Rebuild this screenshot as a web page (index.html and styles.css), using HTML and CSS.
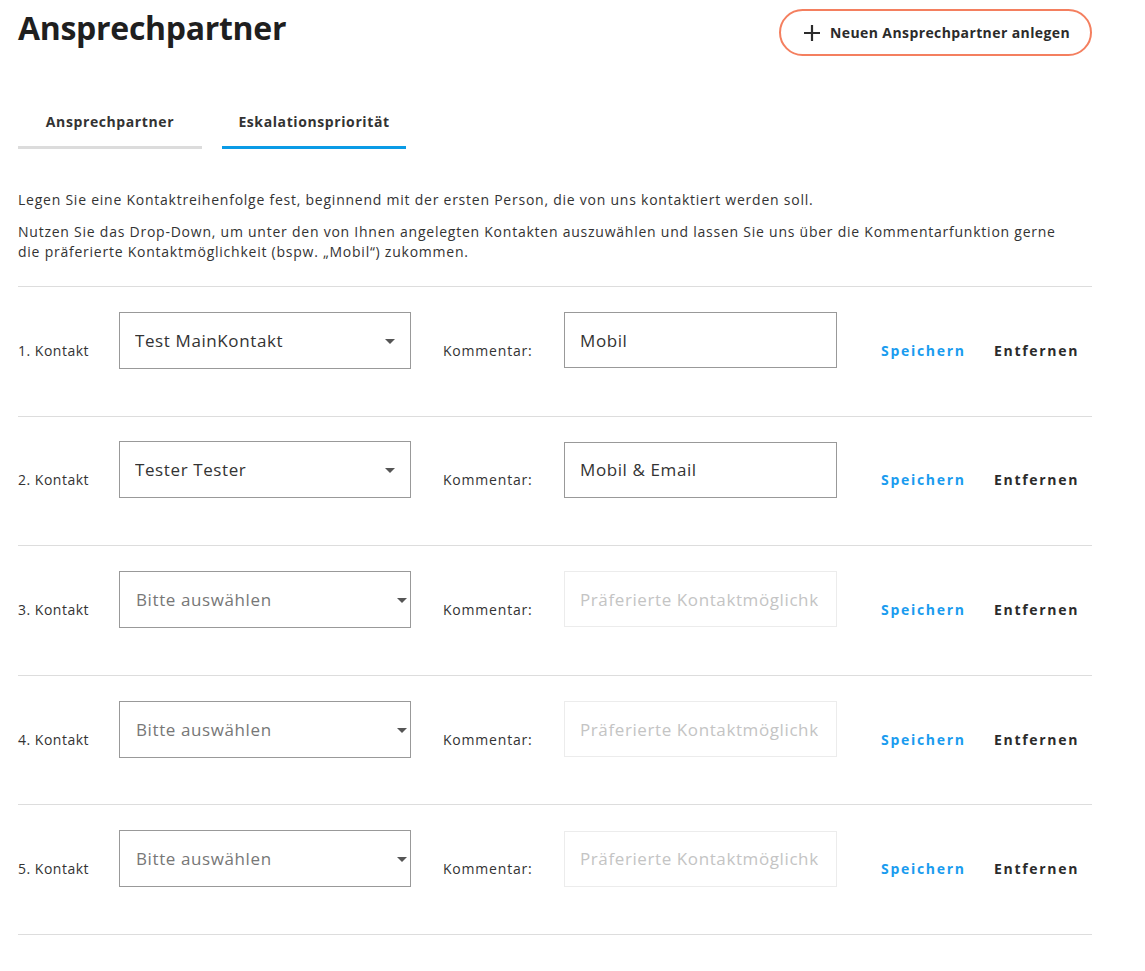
FILE: index.html
```html
<!DOCTYPE html>
<html lang="de">
<head>
<meta charset="utf-8">
<title>Ansprechpartner</title>
<link rel="stylesheet" href="styles.css">
</head>
<body>
<div class="page">
  <header class="head">
    <h1 class="title">Ansprechpartner</h1>
    <button class="btn-new" type="button">
      <svg class="plus" width="18" height="18" viewBox="0 0 18 18"><path d="M9 1v16M1 9h16" stroke="#2b2b2b" stroke-width="2.2" fill="none"/></svg>
      <span>Neuen Ansprechpartner anlegen</span>
    </button>
  </header>

  <nav class="tabs">
    <div class="tab">Ansprechpartner</div>
    <div class="tab active">Eskalationspriorität</div>
  </nav>

  <p class="intro">Legen Sie eine Kontaktreihenfolge fest, beginnend mit der ersten Person, die von uns kontaktiert werden soll.</p>
  <p class="intro second">Nutzen Sie das Drop-Down, um unter den von Ihnen angelegten Kontakten auszuwählen und lassen Sie uns über die Kommentarfunktion gerne die präferierte Kontaktmöglichkeit (bspw. „Mobil“) zukommen.</p>

  <div class="rows">
    <div class="row">
      <span class="k-label">1. Kontakt</span>
      <div class="select"><span class="val">Test MainKontakt</span><span class="arrow"></span></div>
      <span class="c-label">Kommentar:</span>
      <div class="input"><span class="val">Mobil</span></div>
      <div class="actions"><a class="save">Speichern</a><a class="remove">Entfernen</a></div>
    </div>
    <div class="row">
      <span class="k-label">2. Kontakt</span>
      <div class="select"><span class="val">Tester Tester</span><span class="arrow"></span></div>
      <span class="c-label">Kommentar:</span>
      <div class="input"><span class="val">Mobil &amp; Email</span></div>
      <div class="actions"><a class="save">Speichern</a><a class="remove">Entfernen</a></div>
    </div>
    <div class="row">
      <span class="k-label">3. Kontakt</span>
      <div class="select native"><span class="val placeholder">Bitte auswählen</span><span class="arrow"></span></div>
      <span class="c-label">Kommentar:</span>
      <div class="input empty"><span class="val placeholder">Präferierte Kontaktmöglichk</span></div>
      <div class="actions"><a class="save">Speichern</a><a class="remove">Entfernen</a></div>
    </div>
    <div class="row">
      <span class="k-label">4. Kontakt</span>
      <div class="select native"><span class="val placeholder">Bitte auswählen</span><span class="arrow"></span></div>
      <span class="c-label">Kommentar:</span>
      <div class="input empty"><span class="val placeholder">Präferierte Kontaktmöglichk</span></div>
      <div class="actions"><a class="save">Speichern</a><a class="remove">Entfernen</a></div>
    </div>
    <div class="row">
      <span class="k-label">5. Kontakt</span>
      <div class="select native"><span class="val placeholder">Bitte auswählen</span><span class="arrow"></span></div>
      <span class="c-label">Kommentar:</span>
      <div class="input empty"><span class="val placeholder">Präferierte Kontaktmöglichk</span></div>
      <div class="actions"><a class="save">Speichern</a><a class="remove">Entfernen</a></div>
    </div>
  </div>
</div>
</body>
</html>
```

FILE: styles.css
```css
* { box-sizing: border-box; }
html, body { margin: 0; padding: 0; background: #fff; }
body {
  font-family: "Open Sans", "Noto Sans", "DejaVu Sans", sans-serif;
  color: #333;
}
.page {
  width: 1074px;
  margin-left: 18px;
}
.head {
  display: flex;
  justify-content: space-between;
  align-items: flex-start;
  height: 60px;
}
.title {
  margin: 8px 0 0;
  font-size: 32px;
  font-weight: 700;
  color: #1f1f1f;
  letter-spacing: -0.3px;
  line-height: 40px;
}
.btn-new {
  margin: 9px 0 0;
  width: 313px;
  height: 47px;
  border: 2px solid #f47f5f;
  border-radius: 24px;
  background: #fff;
  display: flex;
  align-items: center;
  padding: 0 0 0 22px;
  gap: 9px;
  font-family: inherit;
  font-size: 14px;
  font-weight: 700;
  color: #2b2b2b;
  letter-spacing: 0.4px;
  cursor: pointer;
}
.plus { flex: none; }
.tabs {
  display: flex;
  gap: 20px;
  margin-top: 38px;
}
.tab {
  width: 184px;
  height: 51px;
  text-align: center;
  font-size: 14px;
  font-weight: 700;
  color: #333;
  padding-top: 14px;
  border-bottom: 3px solid #dcdcdc;
  letter-spacing: 0.6px;
}
.tab.active { border-bottom-color: #0a9be6; }
.intro {
  margin: 41px 0 0;
  font-size: 14px;
  line-height: 20px;
  color: #333;
  letter-spacing: 0.76px;
  padding-right: 30px;
}
.intro.second { margin-top: 12px; }
.rows {
  margin-top: 24px;
  border-bottom: 1px solid #ddd;
}
.row {
  display: flex;
  align-items: center;
  border-top: 1px solid #ddd;
  padding: 25px 14px 47px 0;
  height: 129.6px;
}
.k-label {
  font-size: 14px;
  padding-top: 20px;
  margin-right: 30px;
  white-space: nowrap;
  letter-spacing: 0.5px;
}
.select {
  flex: 1;
  height: 57px;
  border: 1px solid #999;
  display: flex;
  align-items: center;
  justify-content: space-between;
  padding: 0 15px 0 15px;
}
.select.native { padding: 0 3px 0 16px; }
.val {
  font-size: 17px;
  color: #333;
  white-space: nowrap;
  overflow: hidden;
  letter-spacing: 0.6px;
}
.val.placeholder { color: #777; }
.input .val.placeholder { color: #c4c4c4; }
.arrow {
  width: 0; height: 0;
  border-left: 5px solid transparent;
  border-right: 5px solid transparent;
  border-top: 5px solid #555;
  margin-top: 2px;
}
.c-label {
  margin-left: 32px;
  width: 121px;
  font-size: 14px;
  padding-top: 20px;
  white-space: nowrap;
  letter-spacing: 0.8px;
}
.input {
  width: 273px;
  height: 56px;
  border: 1px solid #999;
  display: flex;
  align-items: center;
  padding: 0 15px;
  overflow: hidden;
}
.input.empty { border-color: #ececec; }
.actions {
  margin-left: 44px;
  display: flex;
  gap: 29px;
  padding-top: 20px;
}
.actions a {
  width: 84px;
  font-size: 14px;
  font-weight: 700;
  letter-spacing: 1.7px;
  white-space: nowrap;
  cursor: pointer;
}
.save { color: #1a9cef; }
.remove { color: #2b2b2b; }
```
